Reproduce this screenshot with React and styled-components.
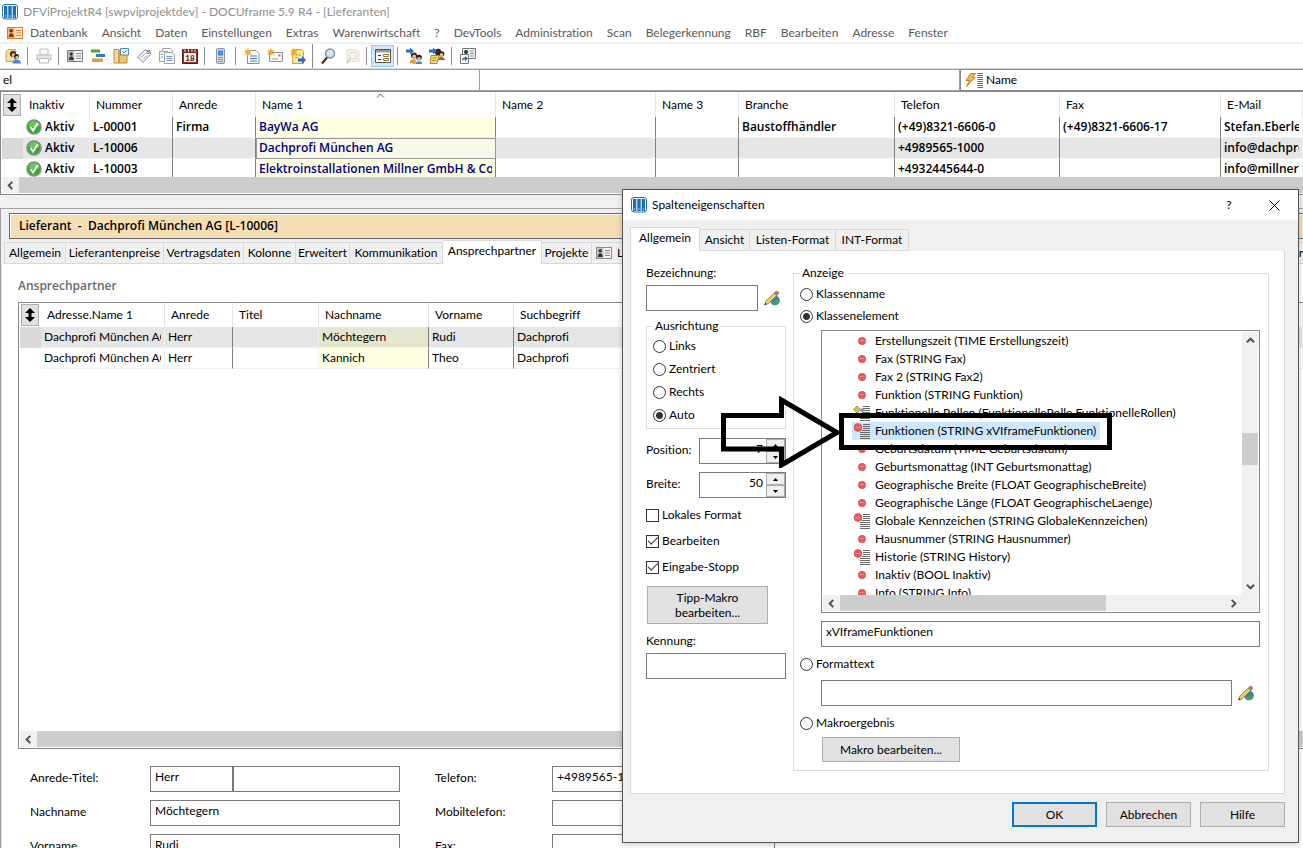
import React, { useState } from "react";
import styled, { createGlobalStyle, css } from "styled-components";

const MENU = [
  "Datenbank",
  "Ansicht",
  "Daten",
  "Einstellungen",
  "Extras",
  "Warenwirtschaft",
  "?",
  "DevTools",
  "Administration",
  "Scan",
  "Belegerkennung",
  "RBF",
  "Bearbeiten",
  "Adresse",
  "Fenster",
];

const TOOLS = [
  { icon: "users" },
  { line: true },
  { icon: "printer" },
  { line: true },
  { icon: "card" },
  { icon: "gantt" },
  { icon: "folder" },
  { icon: "tag" },
  { icon: "docs" },
  { icon: "calendar" },
  { line: true },
  { icon: "phone" },
  { line: true },
  { icon: "newDoc" },
  { icon: "newMail" },
  { icon: "newNote" },
  { line: true, tall: true },
  { icon: "search" },
  { icon: "searchOff" },
  { line: true },
  { icon: "form", active: true },
  { line: true },
  { icon: "linkUsers" },
  { icon: "linkNote" },
  { line: true },
  { icon: "shortcut" },
];

const SUPPLIER_COLS = [
  { title: "Inaktiv", width: 67 },
  { title: "Nummer", width: 83, dark: true },
  { title: "Anrede", width: 83, dark: true },
  { title: "Name 1", width: 240, dark: true, sorted: true },
  { title: "Name 2", width: 160, dark: true },
  { title: "Name 3", width: 83, dark: true },
  { title: "Branche", width: 156, dark: true },
  { title: "Telefon", width: 165, dark: true },
  { title: "Fax", width: 161, dark: true },
  { title: "E-Mail" },
];

const SUPPLIERS = [
  ["Aktiv", "L-00001", "Firma", "BayWa AG", "", "", "Baustoffhändler", "(+49)8321-6606-0", "(+49)8321-6606-17", "Stefan.Eberle."],
  ["Aktiv", "L-10006", "", "Dachprofi München AG", "", "", "", "+4989565-1000", "", "info@dachpro"],
  ["Aktiv", "L-10003", "", "Elektroinstallationen Millner GmbH & Co. KG", "", "", "", "+4932445644-0", "", "info@millnere"],
];

const CONTACT_COLS = [
  { title: "Adresse.Name 1", width: 124 },
  { title: "Anrede", width: 68, dark: true },
  { title: "Titel", width: 86 },
  { title: "Nachname", width: 110, dark: true },
  { title: "Vorname", width: 85, dark: true },
  { title: "Suchbegriff" },
];

const CONTACTS = [
  ["Dachprofi München AG", "Herr", "", "Möchtegern", "Rudi", "Dachprofi"],
  ["Dachprofi München AG", "Herr", "", "Kannich", "Theo", "Dachprofi"],
];

const DETAIL_TABS = [
  { name: "Allgemein", width: 62 },
  { name: "Lieferantenpreise", width: 98 },
  { name: "Vertragsdaten", width: 80 },
  { name: "Kolonne", width: 52 },
  { name: "Erweitert", width: 54 },
  { name: "Kommunikation", width: 93 },
  { name: "Ansprechpartner", width: 99, active: true },
  { name: "Projekte", width: 50 },
  { name: "Lieferanten", width: 90, icon: true },
];

const DIALOG_TABS = [
  { name: "Allgemein", width: 70, active: true },
  { name: "Ansicht", width: 50 },
  { name: "Listen-Format", width: 86 },
  { name: "INT-Format", width: 73 },
];

const ELEMENTS = [
  { text: "Erstellungszeit (TIME Erstellungszeit)" },
  { text: "Fax (STRING Fax)" },
  { text: "Fax 2 (STRING Fax2)" },
  { text: "Funktion (STRING Funktion)" },
  { text: "Funktionelle Rollen (FunktionelleRolle FunktionelleRollen)", kind: "role" },
  { text: "Funktionen (STRING xVIframeFunktionen)", kind: "list" },
  { text: "Geburtsdatum (TIME Geburtsdatum)" },
  { text: "Geburtsmonattag (INT Geburtsmonattag)" },
  { text: "Geographische Breite (FLOAT GeographischeBreite)" },
  { text: "Geographische Länge (FLOAT GeographischeLaenge)" },
  { text: "Globale Kennzeichen (STRING GlobaleKennzeichen)", kind: "list" },
  { text: "Hausnummer (STRING Hausnummer)" },
  { text: "Historie (STRING History)", kind: "list" },
  { text: "Inaktiv (BOOL Inaktiv)" },
  { text: "Info (STRING Info)" },
];

const App = () => {
  return (
    <>
      <GlobalStyle />
      <Desktop>
        <TitleBar>
          <AppIcon />
          DFViProjektR4 [swpviprojektdev] - DOCUframe 5.9 R4 - [Lieferanten]
        </TitleBar>
        <MenuBar>
          <CardIcon orange />
          {MENU.map((m) => (
            <MenuItem key={m}>{m}</MenuItem>
          ))}
        </MenuBar>
        <ToolBar>
          {TOOLS.map((t, i) =>
            t.line ? (
              <ToolLine key={i} $tall={t.tall} />
            ) : (
              <ToolButton key={i} $active={t.active} aria-label={t.icon}>
                <ToolIcon name={t.icon} />
              </ToolButton>
            )
          )}
        </ToolBar>
        <FilterBar>
          <FilterInput aria-label="Suche" defaultValue="el" />
          <FilterInput aria-label="Filter" />
          <FilterField>
            <BoltIcon />
            Name
          </FilterField>
        </FilterBar>
        <SupplierPane>
          <SupplierScroll>
            <DataGrid
              cols={SUPPLIER_COLS}
              rows={SUPPLIERS}
              selected={1}
              yellow={3}
              status
              bold
            />
          </SupplierScroll>
          <HScroll>
            <ScrollArrow dir="left" />
            <Thumb />
          </HScroll>
        </SupplierPane>
        <Detail>
          <Banner>Lieferant&nbsp; -&nbsp; Dachprofi München AG [L-10006]</Banner>
          <DetailTabs>
            {DETAIL_TABS.map((t) => (
              <Tab key={t.name} $width={t.width} $active={t.active}>
                {t.icon && <CardIcon />}
                {t.name}
              </Tab>
            ))}
            <LastTab $width={90}>Kommentar</LastTab>
          </DetailTabs>
          <DetailBody>
            <SectionTitle>Ansprechpartner</SectionTitle>
            <ContactPane>
              <ContactScroll>
                <DataGrid cols={CONTACT_COLS} rows={CONTACTS} selected={0} yellow={3} />
              </ContactScroll>
              <HScroll>
                <ScrollArrow dir="left" />
                <Thumb />
              </HScroll>
            </ContactPane>
            <ContactForm />
          </DetailBody>
        </Detail>
        <ColumnDialog />
      </Desktop>
    </>
  );
};

export default App;

const DataGrid = ({ cols, rows, selected, yellow, status, bold }) => (
  <Grid>
    <colgroup>
      <Col $width={21} />
      {cols.map((c) => (
        <Col key={c.title} $width={c.width} />
      ))}
    </colgroup>
    <thead>
      <tr>
        <CornerCell>
          <Corner aria-label="Sortierung">
            <svg width="10" height="14" viewBox="0 0 10 14">
              <path d="M5 0l5 5H6.500v4H10l-5 5-5-5h3.500V5H0z" />
            </svg>
          </Corner>
        </CornerCell>
        {cols.map((c) => (
          <HeadCell key={c.title}>
            {c.title}
            {c.sorted && (
              <SortMark width="9" height="5" viewBox="0 0 9 5">
                <path d="M1 4.500l3.500-3.500L8 4.500" fill="none" stroke="#555" />
              </SortMark>
            )}
          </HeadCell>
        ))}
      </tr>
    </thead>
    <tbody>
      {rows.map((row, r) => (
        <Row key={r} $selected={r === selected}>
          <Handle $selected={r === selected} />
          {row.map((text, c) => (
            <Cell
              key={c}
              $bold={bold}
              $dark={cols[c].dark}
              $yellow={c === yellow}
              $selected={r === selected}
              $focus={status && r === selected && c === yellow}
            >
              <Clip>
                {status && c === 0 && <CheckIcon />}
                {text}
              </Clip>
            </Cell>
          ))}
        </Row>
      ))}
    </tbody>
  </Grid>
);

const ContactForm = () => (
  <FormGrid>
    <FieldLabel htmlFor="anrede">Anrede-Titel:</FieldLabel>
    <Pair>
      <TextField id="anrede" defaultValue="Herr" />
      <TextField aria-label="Titel" />
    </Pair>
    <FieldLabel htmlFor="telefon">Telefon:</FieldLabel>
    <TextField id="telefon" defaultValue="+4989565-1000" />
    <FieldLabel htmlFor="nachname">Nachname</FieldLabel>
    <TextField id="nachname" defaultValue="Möchtegern" />
    <FieldLabel htmlFor="mobil">Mobiltelefon:</FieldLabel>
    <TextField id="mobil" />
    <FieldLabel htmlFor="vorname">Vorname</FieldLabel>
    <TextField id="vorname" defaultValue="Rudi" />
    <FieldLabel htmlFor="fax">Fax:</FieldLabel>
    <TextField id="fax" />
  </FormGrid>
);

const ColumnDialog = () => {
  const [align, setAlign] = useState("Auto");
  const [source, setSource] = useState("Klassenelement");
  const [current, setCurrent] = useState(5);

  const sourceRadio = (name) => (
    <Choice>
      <Radio
        name="source"
        checked={source === name}
        onChange={() => setSource(name)}
      />
      {name}
    </Choice>
  );

  return (
    <Dialog role="dialog" aria-labelledby="dialog-title">
      <DialogHead>
        <AppIcon />
        <DialogTitle id="dialog-title">Spalteneigenschaften</DialogTitle>
        <HeadButton>?</HeadButton>
        <HeadButton aria-label="Schließen">
          <svg width="11" height="11" viewBox="0 0 11 11">
            <path d="M.5.5l10 10M10.500.5l-10 10" stroke="#000" fill="none" />
          </svg>
        </HeadButton>
      </DialogHead>
      <DialogBody>
        <DialogTabs>
          {DIALOG_TABS.map((t) => (
            <Tab key={t.name} $width={t.width} $active={t.active}>
              {t.name}
            </Tab>
          ))}
        </DialogTabs>
        <TabPage>
          <LeftColumn>
            <Label htmlFor="bez">Bezeichnung:</Label>
            <InputRow>
              <TextField id="bez" />
              <PencilIcon />
            </InputRow>
            <AlignGroup>
              <Legend>Ausrichtung</Legend>
              {["Links", "Zentriert", "Rechts", "Auto"].map((a) => (
                <Choice key={a}>
                  <Radio
                    name="align"
                    checked={align === a}
                    onChange={() => setAlign(a)}
                  />
                  {a}
                </Choice>
              ))}
            </AlignGroup>
            <Spin id="pos" label="Position:" value="7" />
            <Spin id="breite" label="Breite:" value="50" />
            <Checks>
              <Choice>
                <Checkbox />
                Lokales Format
              </Choice>
              <Choice>
                <Checkbox defaultChecked />
                Bearbeiten
              </Choice>
              <Choice>
                <Checkbox defaultChecked />
                Eingabe-Stopp
              </Choice>
            </Checks>
            <MacroButton>
              Tipp-Makro
              <br />
              bearbeiten...
            </MacroButton>
            <Label htmlFor="kennung">Kennung:</Label>
            <TextField id="kennung" />
          </LeftColumn>
          <SourceGroup>
            <Legend>Anzeige</Legend>
            {sourceRadio("Klassenname")}
            {sourceRadio("Klassenelement")}
            <ElementBox>
              <ElementList>
                {ELEMENTS.map((e, i) => (
                  <Element key={e.text} onClick={() => setCurrent(i)}>
                    <ElementMark $selected={i === current}>
                      <ElementIcon kind={e.kind} />
                      {e.text}
                    </ElementMark>
                  </Element>
                ))}
              </ElementList>
              <VScroll>
                <ScrollArrow dir="up" />
                <VThumb />
                <ScrollArrow dir="down" />
              </VScroll>
              <HScroll>
                <ScrollArrow dir="left" />
                <ShortThumb />
                <ScrollArrow dir="right" />
              </HScroll>
            </ElementBox>
            <Indent>
              <TextField aria-label="Element" defaultValue="xVIframeFunktionen" />
            </Indent>
            {sourceRadio("Formattext")}
            <Indent>
              <TextField aria-label="Formattext" />
              <PencilIcon />
            </Indent>
            {sourceRadio("Makroergebnis")}
            <Indent>
              <WideButton>Makro bearbeiten...</WideButton>
            </Indent>
          </SourceGroup>
        </TabPage>
        <DialogFoot>
          <FootButton $primary>OK</FootButton>
          <FootButton>Abbrechen</FootButton>
          <FootButton>Hilfe</FootButton>
        </DialogFoot>
      </DialogBody>
      <Marker viewBox="0 0 394 72" width="394" height="72">
        <path
          d="M4.500 19.500H62.500V4L118 36.500L62.500 69V53H4.500Z"
          fill="none"
          stroke="#000"
          strokeWidth="5"
        />
        <rect x="122.500" y="19.500" width="268" height="32" fill="none" stroke="#000" strokeWidth="5" />
      </Marker>
    </Dialog>
  );
};

const Spin = ({ id, label, value }) => (
  <SpinRow>
    <label htmlFor={id}>{label}</label>
    <SpinBox>
      <SpinInput id={id} defaultValue={value} />
      <SpinButtons>
        <SpinButton aria-label="mehr">
          <svg width="5" height="3" viewBox="0 0 5 3">
            <path d="M0 3L2.500 0L5 3z" />
          </svg>
        </SpinButton>
        <SpinButton aria-label="weniger">
          <svg width="5" height="3" viewBox="0 0 5 3">
            <path d="M0 0L2.500 3L5 0z" />
          </svg>
        </SpinButton>
      </SpinButtons>
    </SpinBox>
  </SpinRow>
);

/* icons */

const AppIcon = () => (
  <svg width="16" height="16" viewBox="0 0 16 16">
    <rect x=".5" y=".5" width="15" height="14.500" rx="2.500" fill="#fff" stroke="#1c6fb3" />
    <path d="M2 2h3.300v12H2zM6.300 2h3.400v12H6.300zM10.700 2H14v12h-3.300z" fill="#1c6fb3" />
    <path d="M3 11.500h1v1H3zM7.500 11.500h1v1h-1zM12 11.500h1v1h-1z" fill="#fff" />
  </svg>
);

const CardIcon = ({ orange }) => (
  <svg width="16" height="12" viewBox="0 0 16 12">
    <rect x=".5" y=".5" width="15" height="11" fill={orange ? "#ffe9d2" : "#f4f4f4"} stroke={orange ? "#e07b1f" : "#8a8a8a"} />
    <path d="M1 1h6.500v10H1z" fill={orange ? "#f6b070" : "#c4c4c4"} />
    <circle cx="4.200" cy="3.800" r="1.700" fill={orange ? "#5a2c10" : "#333"} />
    <path d="M1.800 10c0-5 5-5 5 0z" fill={orange ? "#7a3b12" : "#333"} />
    <path d="M9 3.500h5M9 6h5M9 8.500h5" stroke={orange ? "#d9812c" : "#8a8a8a"} />
  </svg>
);

const CheckIcon = () => (
  <svg width="16" height="16" viewBox="0 0 16 16">
    <circle cx="8" cy="8" r="7" fill="#2eae2a" stroke="#8c8c8c" strokeWidth="1.600" />
    <path d="M2.500 7a5.500 5 0 0 1 11 0c-3 1.500-8 1.500-11 0z" fill="#7fd46f" opacity=".7" />
    <path d="M4.500 8.200l2.600 3.300 4.600-7.200" fill="none" stroke="#fff" strokeWidth="2" />
  </svg>
);

const BoltIcon = () => (
  <svg width="18" height="16" viewBox="0 0 18 16">
    <path d="M5.500 1.500h5L7.500 5.500H10L1.500 14.500 4.500 8.500H1z" fill="#f4b942" stroke="#b5651d" strokeWidth=".8" />
    <path d="M12.500 1.500H18M12.500 3.500H18M12.500 5.500H18M12.500 7.500H18M12.500 9.500H18M12.500 11.500H18M12.500 13.500H18M12.500 15.500H18" stroke="#666" />
  </svg>
);

const PencilIcon = () => (
  <svg width="16" height="16" viewBox="0 0 16 16">
    <circle cx="11" cy="10.500" r="4.800" fill="#2a7fc9" />
    <path d="M8 13c1-3 4-1 5-4l2 2c0 2-2 4-4 4z" fill="#3fa545" />
    <path d="M.5 15l1.500-4L12 1.500 14.500 4 4.500 13.500z" fill="#f3cf6b" stroke="#8a6a2a" strokeWidth=".8" />
    <path d="M10 3.200l1.200-1.200 2.600 2.600L12.600 5.800z" fill="#4d9a5a" />
    <path d="M11.500 2L13 .5 15.500 3 14 4.500z" fill="#d9636b" />
    <path d="M.5 15l.8-2 1.200 1.200z" fill="#222" />
  </svg>
);

const ElementIcon = ({ kind }) => {
  if (!kind) {
    return (
      <svg width="20" height="16" viewBox="0 0 20 16">
        <circle cx="10" cy="8" r="3.700" fill="#ea5a5a" stroke="#d04040" strokeWidth=".6" />
        <path d="M7.500 7.500h5" stroke="#f28a8a" />
      </svg>
    );
  }
  return (
    <svg width="20" height="16" viewBox="0 0 20 16">
      <path d="M11 1.500h7M11 3.500h7M11 5.500h7M10 7.500h8M8 9.500h10M8 11.500h10M8 13.500h10M8 15.500h10" stroke="#666" />
      {kind === "list" ? (
        <g>
          <circle cx="6" cy="4.500" r="3.900" fill="#ea5a5a" stroke="#d04040" strokeWidth=".6" />
          <path d="M3.500 4.500h5" stroke="#f28a8a" />
        </g>
      ) : (
        <g>
          <path d="M5 1l3.500 3.500L5 8 1.500 4.500z" fill="#d8c050" stroke="#857020" strokeWidth=".7" />
          <path d="M10 3l2.200 2.200L10 7.400 7.800 5.200z" fill="#b06ad0" />
          <path d="M6.500 8l2 2-2 2-2-2z" fill="#5bb0d0" />
        </g>
      )}
    </svg>
  );
};

const star = <path d="M4 0l1 2.600L8 2 6 4.200 8 7 4.800 6 4 8.500 3 6 0 7l1.800-2.800L0 2l3 .6z" fill="#f5a623" />;

const people = (
  <g>
    <circle cx="7" cy="5.500" r="3" fill="#3b2317" />
    <circle cx="7.200" cy="6.500" r="2" fill="#e5b58a" />
    <circle cx="12" cy="7.500" r="2.800" fill="#2b1a12" />
    <circle cx="12" cy="8.800" r="1.900" fill="#e5b58a" />
    <path d="M8 15c0-5 8-5 8 0z" fill="#4a86d8" />
    <path d="M2.500 13c0-4 5-5 6.500-2.500L8 14z" fill="#d9a030" />
  </g>
);

const SHAPES = {
  users: (
    <g>
      <path d="M1 3.500l2-2h7.500v12H1z" fill="#f2dc9a" stroke="#c9a95a" />
      <circle cx="8" cy="6" r="3" fill="#3b2317" />
      <circle cx="8.600" cy="7" r="1.900" fill="#e5b58a" />
      <circle cx="11.500" cy="8.500" r="2.500" fill="#2b1a12" />
      <circle cx="12" cy="9.500" r="1.700" fill="#e5b58a" />
      <path d="M7.500 15.500c0-5.500 8-5.500 8.500 0z" fill="#4a86d8" />
    </g>
  ),
  printer: (
    <g fill="#e6e6e6" stroke="#bdbdbd">
      <path d="M4 1h8v6H4z" fill="#fafafa" />
      <path d="M1 7h14v5H1z" />
      <path d="M3.500 10.500h9V15h-9z" fill="#fafafa" />
    </g>
  ),
  card: (
    <g>
      <path d="M.5 2.500h15v11H.5z" fill="#f4f4f4" stroke="#777" />
      <path d="M1 3h6.500v10H1z" fill="#c4c4c4" />
      <circle cx="4.200" cy="6" r="1.700" fill="#333" />
      <path d="M1.800 12c0-5 5-5 5 0z" fill="#333" />
      <path d="M9 5.500h5M9 8h5M9 10.500h5" stroke="#8a8a8a" />
    </g>
  ),
  gantt: (
    <g>
      <path d="M1 1.500h9V4.500H1z" fill="#49a52c" />
      <path d="M6 6h9V9H6z" fill="#3775c8" />
      <path d="M2 10.500h11V14H2z" fill="#dd9d36" />
    </g>
  ),
  folder: (
    <g>
      <path d="M1 1.500h5v13.500H1z" fill="#f3dc94" stroke="#b58a34" />
      <path d="M6 3h8v12H6z" fill="#edc66b" stroke="#b58a34" />
      <path d="M7.500.5h8v6.500h-8z" fill="#fff" stroke="#4f88c4" />
      <path d="M9.500 3.500l1.500 1.500 3-3" fill="none" stroke="#2f72b8" />
    </g>
  ),
  tag: (
    <g>
      <path d="M1.500 9L9 2l5 .5.500 4L7 14.500z" fill="#f7f7f7" stroke="#888" />
      <circle cx="12" cy="4.500" r="1.200" fill="#fff" stroke="#4f7fae" />
      <path d="M5 9.500l4-4M7 11.500l4-4" stroke="#7ca0c4" />
    </g>
  ),
  docs: (
    <g fill="#fdfdfd" stroke="#a2a2a2">
      <path d="M3.500.5h8l2 2v10h-10z" />
      <path d="M.5 3.500h8v10h-8z" />
      <path d="M5.500 4.500h7.500l2.500 2.500v8.500h-10z" />
      <path d="M7.500 8.500h6M7.500 10.500h6M7.500 12.500h6M2 6.500h2M2 9h2" stroke="#6f8fcc" />
    </g>
  ),
  calendar: (
    <g>
      <path d="M.5 1.500h15v14H.5z" fill="#8d2b22" stroke="#5e1c16" />
      <path d="M2 5h12v9H2z" fill="#f9f4e6" />
      <path d="M3 0v4M6.500 0v4M10 0v4M13 0v4" stroke="#ddd" />
      <text x="8" y="12.500" fontSize="8" fontWeight="700" textAnchor="middle" fill="#222">
        18
      </text>
    </g>
  ),
  phone: (
    <g>
      <rect x="3.500" y=".5" width="8" height="15" rx="1.500" fill="#d5dae0" stroke="#8c939c" />
      <path d="M5 2.500h5v5H5z" fill="#3d8fe0" />
      <path d="M5 9.500h5M5 11.500h5M5 13.500h5" stroke="#8c939c" />
    </g>
  ),
  newDoc: (
    <g>
      <path d="M3.500 2.500H12l3 3v10H3.500z" fill="#fdfdfd" stroke="#8d8d8d" />
      <path d="M6 8h7M6 10.500h7M6 13h7" stroke="#4a7cc4" />
      {star}
    </g>
  ),
  newMail: (
    <g>
      <path d="M2.500 4.500h13v9h-13z" fill="#fafafa" stroke="#8d8d8d" />
      <path d="M11.500 6.500h2v2h-2z" fill="#d05050" />
      <path d="M5 11h6" stroke="#999" />
      {star}
    </g>
  ),
  newNote: (
    <g>
      <path d="M2.500 1.500h9l2 2v12h-11z" fill="#fbe59a" stroke="#c9a43c" />
      <path d="M5 7h6M5 9.500h3" stroke="#c9a43c" />
      <path d="M8 10.500h4V8l4 4-4 4v-2.500H8z" fill="#2c65c4" />
      {star}
    </g>
  ),
  search: (
    <g>
      <path d="M6 9.500L1 15.500" stroke="#333" strokeWidth="2.200" />
      <circle cx="9" cy="5.500" r="4.500" fill="#cfe6f8" stroke="#8a8f96" strokeWidth="1.500" />
    </g>
  ),
  searchOff: (
    <g opacity=".6">
      <path d="M3 1.500h8l4 2v10H3z" fill="#f3e7cb" stroke="#ddcda6" />
      <path d="M6.500 10.500L2.500 15" stroke="#b4b4b4" strokeWidth="2" />
      <circle cx="9" cy="7.500" r="3.400" fill="#f0f0f0" stroke="#c0c0c0" />
    </g>
  ),
  form: (
    <g>
      <path d="M.5 1.500h15v13H.5z" fill="#fff" stroke="#555" />
      <path d="M1 2h14v2.500H1z" fill="#9a9a9a" />
      <path d="M3 7.500h3M3 11.500h3" stroke="#333" />
      <path d="M8.500 6.500h5v2h-5zM8.500 10.500h5v2h-5z" fill="#fff" stroke="#8a7a30" />
    </g>
  ),
  linkUsers: (
    <g>
      <g transform="translate(1 2)">{people}</g>
      <path d="M0 1.500h4V-.5L8 3 4 6.500V4.500H0z" fill="#2f6bc9" />
    </g>
  ),
  linkNote: (
    <g>
      <circle cx="9" cy="4" r="3.200" fill="#3b2317" />
      <circle cx="12.500" cy="6" r="2.800" fill="#2b1a12" />
      <circle cx="12.500" cy="7" r="1.900" fill="#e5b58a" />
      <path d="M9 12c0-4 6-4 7 0z" fill="#b3542e" />
      <path d="M2 7.500h8l-2 8H1z" fill="#f4d774" stroke="#a88730" />
      <path d="M3.500 10h4M3 12.500h4" stroke="#a88730" />
      <path d="M0 1.500h4V-.5L8 3 4 6.500V4.500H0z" fill="#2f6bc9" />
    </g>
  ),
  shortcut: (
    <g>
      <path d="M2.500.5h13v10h-13z" fill="#f4f4f4" stroke="#777" />
      <circle cx="6" cy="4" r="2" fill="#333" />
      <path d="M10 3h4M10 5.500h4M10 8h4" stroke="#8a8a8a" />
      <path d="M.5 6.500h8v9h-8z" fill="#fff" stroke="#777" />
      <path d="M2 13.500c0-3 1-4 3-4V8l3 2.500-3 2.500v-1.500c-1.500 0-2.500.5-3 2z" fill="#1f5fb0" />
    </g>
  ),
};

const ToolIcon = ({ name }) => (
  <svg width="16" height="16" viewBox="0 0 16 16">
    {SHAPES[name]}
  </svg>
);

const ARROWS = {
  left: "M7 1L3 5l4 4",
  right: "M3 1l4 4-4 4",
  up: "M1 7l4-4 4 4",
  down: "M1 3l4 4 4-4",
};

const ScrollArrow = ({ dir }) => (
  <ArrowBox aria-label={dir}>
    <svg width="9" height="9" viewBox="0 0 10 10">
      <path d={ARROWS[dir]} fill="none" stroke="#505050" strokeWidth="2.200" />
    </svg>
  </ArrowBox>
);

/* styles */

const GlobalStyle = createGlobalStyle`
  * {
    box-sizing: border-box;
  }

  body {
    margin: 0;
    background: #fff;
  }

  body, button, input {
    font-family: Lato, "Open Sans", sans-serif;
    font-size: 12px;
    line-height: 16px;
    font-variant-ligatures: none;
    color: #000;
  }

  svg {
    flex: none;
    display: block;
  }
`;

const boldText = css`
  font-family: "Open Sans", sans-serif;
  font-weight: 600;
`;

const Desktop = styled.div`
  position: relative;
  height: 100vh;
  overflow: hidden;
  display: flex;
  flex-direction: column;
  white-space: nowrap;
`;

const TitleBar = styled.header`
  flex: none;
  height: 24px;
  padding-left: 2px;
  display: flex;
  align-items: center;
  gap: 5px;
  color: #8f8f8f;
`;

const MenuBar = styled.nav`
  flex: none;
  height: 18px;
  padding-left: 7px;
  display: flex;
  align-items: center;
`;

const MenuItem = styled.button`
  border: 0;
  background: none;
  padding: 0 7px;
  color: #5a5a5a;
`;

const ToolBar = styled.div`
  flex: none;
  height: 27px;
  border-top: 2px solid #f0f0f0;
  border-bottom: 1px solid #d8d8d8;
  padding-left: 1px;
  display: flex;
  align-items: center;
`;

const ToolButton = styled.button`
  width: 23px;
  height: 22px;
  padding: 0;
  display: flex;
  align-items: center;
  justify-content: center;
  border: 1px solid ${({ $active }) => ($active ? "#90c8f6" : "transparent")};
  background: ${({ $active }) => ($active ? "#cce8ff" : "none")};
`;

const ToolLine = styled.div`
  width: 1px;
  height: ${({ $tall }) => ($tall ? "24px" : "18px")};
  margin: 0 4px 0 3px;
  background: #8c8c8c;
`;

const FilterBar = styled.div`
  flex: none;
  height: 23px;
  display: flex;
  border-bottom: 1px solid #828790;
`;

const FilterInput = styled.input`
  width: 480px;
  border: 1px solid #a0a0a0;
  border-left-width: 0;
  border-right-width: 1px;
  padding: 0 3px;
  outline: 0;
`;

const FilterField = styled.div`
  flex: 1;
  display: flex;
  align-items: center;
  gap: 3px;
  padding-left: 4px;
  border: 1px solid #828790;
  border-right: 0;
`;

const SupplierPane = styled.section`
  flex: none;
  border: 1px solid #828790;
  border-top: 0;
  border-right: 0;
  padding: 1px 0 1px 1px;
`;

const SupplierScroll = styled.div`
  height: 84px;
  overflow: hidden;
`;

const Grid = styled.table`
  width: 100%;
  table-layout: fixed;
  border-collapse: separate;
  border-spacing: 0;
`;

const Col = styled.col`
  width: ${({ $width }) => ($width ? `${$width}px` : "auto")};
`;

const HeadCell = styled.th`
  position: relative;
  height: 24px;
  padding: 0 6px;
  font-weight: 400;
  text-align: left;
  border-right: 1px solid #e5e5e5;
`;

const SortMark = styled.svg`
  position: absolute;
  top: 0;
  left: 50%;
`;

const CornerCell = styled.td`
  padding: 0;
`;

const Corner = styled.button`
  width: 18px;
  height: 22px;
  margin-left: 1px;
  padding: 0;
  display: flex;
  align-items: center;
  justify-content: center;
  border: 1px solid #adadad;
  background: #e1e1e1;
`;

const Row = styled.tr`
  background: ${({ $selected }) => ($selected ? "#e6e6e6" : "#fff")};
`;

const Handle = styled.td`
  background: ${({ $selected }) => ($selected ? "#d9d9d9" : "#fff")};
`;

const Cell = styled.td`
  height: 21px;
  padding: 0 3px;
  ${({ $bold }) => $bold && boldText}
  border-bottom: 1px solid #f0f0f0;
  border-right: 1px solid ${({ $dark }) => ($dark ? "#808080" : "#f0f0f0")};
  ${({ $yellow, $selected, $bold }) =>
    $yellow &&
    css`
      color: ${$bold ? "#000080" : "#000"};
      background: ${$selected ? ($bold ? "#f7f8e8" : "#e6e6d0") : "#ffffe1"};
    `}
  ${({ $focus }) =>
    $focus &&
    css`
      outline: 1px solid #999;
      outline-offset: -1px;
    `}
`;

const Clip = styled.div`
  height: 16px;
  overflow: hidden;
  display: flex;
  align-items: center;
  gap: 3px;
`;

const HScroll = styled.div`
  height: 16px;
  display: flex;
  background: #f0f0f0;
`;

const ArrowBox = styled.button`
  flex: none;
  width: 17px;
  height: 16px;
  padding: 0;
  border: 0;
  background: #f0f0f0;
  display: flex;
  align-items: center;
  justify-content: center;
`;

const Thumb = styled.div`
  flex: 1;
  background: #cdcdcd;
`;

const Detail = styled.section`
  flex: 1;
  min-height: 0;
  display: flex;
  flex-direction: column;
  padding-top: 4px;
  margin-top: 13px;
  background: #f0f0f0;
  border-top: 1px solid #a0a0a0;
  border-left: 1px solid #a0a0a0;
  box-shadow: 0 -13px 0 #f0f0f0;
`;

const Banner = styled.div`
  flex: none;
  height: 26px;
  margin-left: 8px;
  padding: 0 9px;
  display: flex;
  align-items: center;
  ${boldText}
  background: #f5deb3;
  border: 1px solid #696969;
  border-right: 0;
  box-shadow: inset 1px 1px #fff;
`;

const DetailTabs = styled.div`
  flex: none;
  height: 25px;
  display: flex;
  align-items: flex-end;
  padding-left: 3px;
`;

const Tab = styled.button`
  flex: none;
  width: ${({ $width }) => $width}px;
  height: 22px;
  padding: 0;
  display: flex;
  align-items: center;
  justify-content: center;
  gap: 5px;
  white-space: nowrap;
  border: 1px solid #d9d9d9;
  border-left-width: 0;
  background: #f0f0f0;

  &:first-child {
    border-left-width: 1px;
  }

  ${({ $active }) =>
    $active &&
    css`
      height: 24px;
      padding-bottom: 3px;
      border-bottom: 0;
      background: #fff;
    `}
`;

const LastTab = styled(Tab)`
  margin-left: auto;
  justify-content: flex-end;
  border-right-width: 0;
`;

const DetailBody = styled.div`
  flex: 1;
  min-height: 0;
  display: flex;
  flex-direction: column;
  padding: 14px 0 0 16px;
  background: #fff;
  border-left: 1px solid #d9d9d9;
`;

const SectionTitle = styled.h2`
  margin: 0 0 8px;
  font-size: 12px;
  line-height: 16px;
  ${boldText}
  color: #696969;
`;

const ContactPane = styled.div`
  flex: none;
  border: 1px solid #828790;
  border-right: 0;
  padding: 0 0 1px 1px;
`;

const ContactScroll = styled.div`
  height: 428px;
  overflow: hidden;
`;

const FormGrid = styled.form`
  display: grid;
  grid-template-columns: 120px 250px 35px 117px 223px;
  grid-auto-rows: 26px;
  row-gap: 8px;
  padding: 17px 0 0 12px;

  > :nth-child(4n + 3) {
    grid-column: 4;
  }
`;

const FieldLabel = styled.label`
  align-self: center;
  padding-bottom: 2px;
`;

const Pair = styled.div`
  display: grid;
  grid-template-columns: 83px 1fr;
`;

const TextField = styled.input`
  width: 100%;
  min-width: 0;
  height: 26px;
  padding: 0 4px 5px;
  border: 1px solid #7a7a7a;
  border-radius: 0;
  background: #fff;
  outline: 0;
`;

const Dialog = styled.section`
  position: absolute;
  top: 189px;
  left: 622px;
  width: 677px;
  border: 1px solid #555;
  background: #f0f0f0;
  box-shadow: 0 2px 6px rgba(0, 0, 0, 0.2);
`;

const DialogHead = styled.header`
  height: 30px;
  display: flex;
  align-items: center;
  gap: 5px;
  padding: 0 4px 0 8px;
  background: #fff;
`;

const DialogTitle = styled.h1`
  flex: 1;
  margin: 0;
  font-size: 12px;
  font-weight: 400;
`;

const HeadButton = styled.button`
  width: 40px;
  height: 28px;
  padding: 0;
  display: flex;
  align-items: center;
  justify-content: center;
  border: 0;
  background: none;
`;

const DialogBody = styled.div`
  padding: 8px 13px 15px 7px;
`;

const DialogTabs = styled.div`
  height: 23px;
  display: flex;
  align-items: flex-end;
`;

const TabPage = styled.div`
  display: grid;
  grid-template-columns: 140px 1fr;
  gap: 7px;
  padding: 14px 15px 22px;
  border: 1px solid #d9d9d9;
  border-top-width: 0;
  background: #fff;
`;

const LeftColumn = styled.div`
  display: flex;
  flex-direction: column;
`;

const Label = styled.label`
  margin-bottom: 4px;
`;

const InputRow = styled.div`
  display: grid;
  grid-template-columns: 112px 16px;
  gap: 6px;
  align-items: center;
`;

const AlignGroup = styled.fieldset`
  margin: 7px 0 9px;
  padding: 4px 6px 5px;
  border: 1px solid #dcdcdc;
  display: flex;
  flex-direction: column;
  gap: 7px;
`;

const Legend = styled.legend`
  padding: 0 2px;
`;

const Choice = styled.label`
  display: flex;
  align-items: center;
  gap: 3px;
`;

const Radio = styled.input.attrs({ type: "radio" })`
  appearance: none;
  width: 13px;
  height: 13px;
  margin: 0;
  border: 1px solid #333;
  border-radius: 50%;
  background: #fff;

  &:checked {
    background: radial-gradient(circle, #333 3px, #fff 4px);
  }
`;

const Checkbox = styled.input.attrs({ type: "checkbox" })`
  appearance: none;
  width: 13px;
  height: 13px;
  margin: 0;
  display: grid;
  place-items: center;
  border: 1px solid #333;
  background: #fff;

  &:checked::before {
    content: "";
    width: 9px;
    height: 4px;
    margin-bottom: 3px;
    border: solid #333;
    border-width: 0 0 1px 1px;
    transform: rotate(-45deg);
  }
`;

const SpinRow = styled.div`
  display: grid;
  grid-template-columns: 53px minmax(0, 1fr);
  margin-bottom: 8px;

  label {
    padding-top: 4px;
  }
`;

const SpinBox = styled.div`
  height: 26px;
  display: flex;
  border: 1px solid #7a7a7a;
`;

const SpinInput = styled.input`
  flex: 1;
  min-width: 0;
  padding: 0 3px 5px;
  border: 0;
  outline: 0;
  text-align: right;
`;

const SpinButtons = styled.div`
  width: 19px;
  display: grid;
  grid-template-rows: 1fr 1fr;
`;

const SpinButton = styled.button`
  padding: 0;
  display: flex;
  align-items: center;
  justify-content: center;
  border: 1px solid #adadad;
  background: #f0f0f0;
`;

const Checks = styled.div`
  display: flex;
  flex-direction: column;
  gap: 10px;
  margin: 1px 0 11px;
`;

const Button = styled.button`
  height: 25px;
  padding: 0;
  border: 1px solid #adadad;
  background: #e1e1e1;
`;

const MacroButton = styled(Button)`
  width: 121px;
  height: 38px;
  margin: 0 0 9px 1px;
  line-height: 15px;
`;

const WideButton = styled(Button)`
  width: 138px;
`;

const SourceGroup = styled.fieldset`
  min-width: 0;
  margin: 0;
  padding: 5px 8px 8px 6px;
  border: 1px solid #dcdcdc;
  display: flex;
  flex-direction: column;
  gap: 6px;
`;

const ElementBox = styled.div`
  height: 283px;
  margin-left: 21px;
  padding: 1px;
  display: grid;
  grid-template-columns: 1fr 16px;
  grid-template-rows: 1fr 16px;
  border: 1px solid #828790;
`;

const ElementList = styled.ul`
  margin: 0;
  padding: 0 0 0 29px;
  list-style: none;
  overflow: hidden;
`;

const Element = styled.li`
  height: 18px;
`;

const ElementMark = styled.span`
  display: inline-flex;
  align-items: center;
  gap: 3px;
  height: 18px;
  padding-right: 4px;
  background: ${({ $selected }) => ($selected ? "#cce8ff" : "none")};
`;

const VScroll = styled.div`
  grid-row: span 2;
  display: flex;
  flex-direction: column;
  padding-bottom: 17px;
  background: #f0f0f0;
`;

const VThumb = styled.div`
  height: 32px;
  margin: 85px 0 auto;
  background: #cdcdcd;
`;

const ShortThumb = styled.div`
  width: 266px;
  margin-right: auto;
  background: #cdcdcd;
`;

const Indent = styled.div`
  display: flex;
  align-items: center;
  gap: 6px;
  margin: 2px 0 3px 21px;

  &:last-child {
    margin: 0 0 0 22px;
  }

  svg {
    margin-right: 6px;
  }
`;

const DialogFoot = styled.footer`
  display: flex;
  justify-content: flex-end;
  gap: 9px;
  padding-top: 8px;
`;

const FootButton = styled(Button)`
  width: 85px;
  border: ${({ $primary }) => ($primary ? "2px solid #0078d7" : "1px solid #adadad")};
`;

/* hand-drawn hint laid over the dialog */
const Marker = styled.svg`
  position: absolute;
  top: 206px;
  left: 96px;
  pointer-events: none;
`;
